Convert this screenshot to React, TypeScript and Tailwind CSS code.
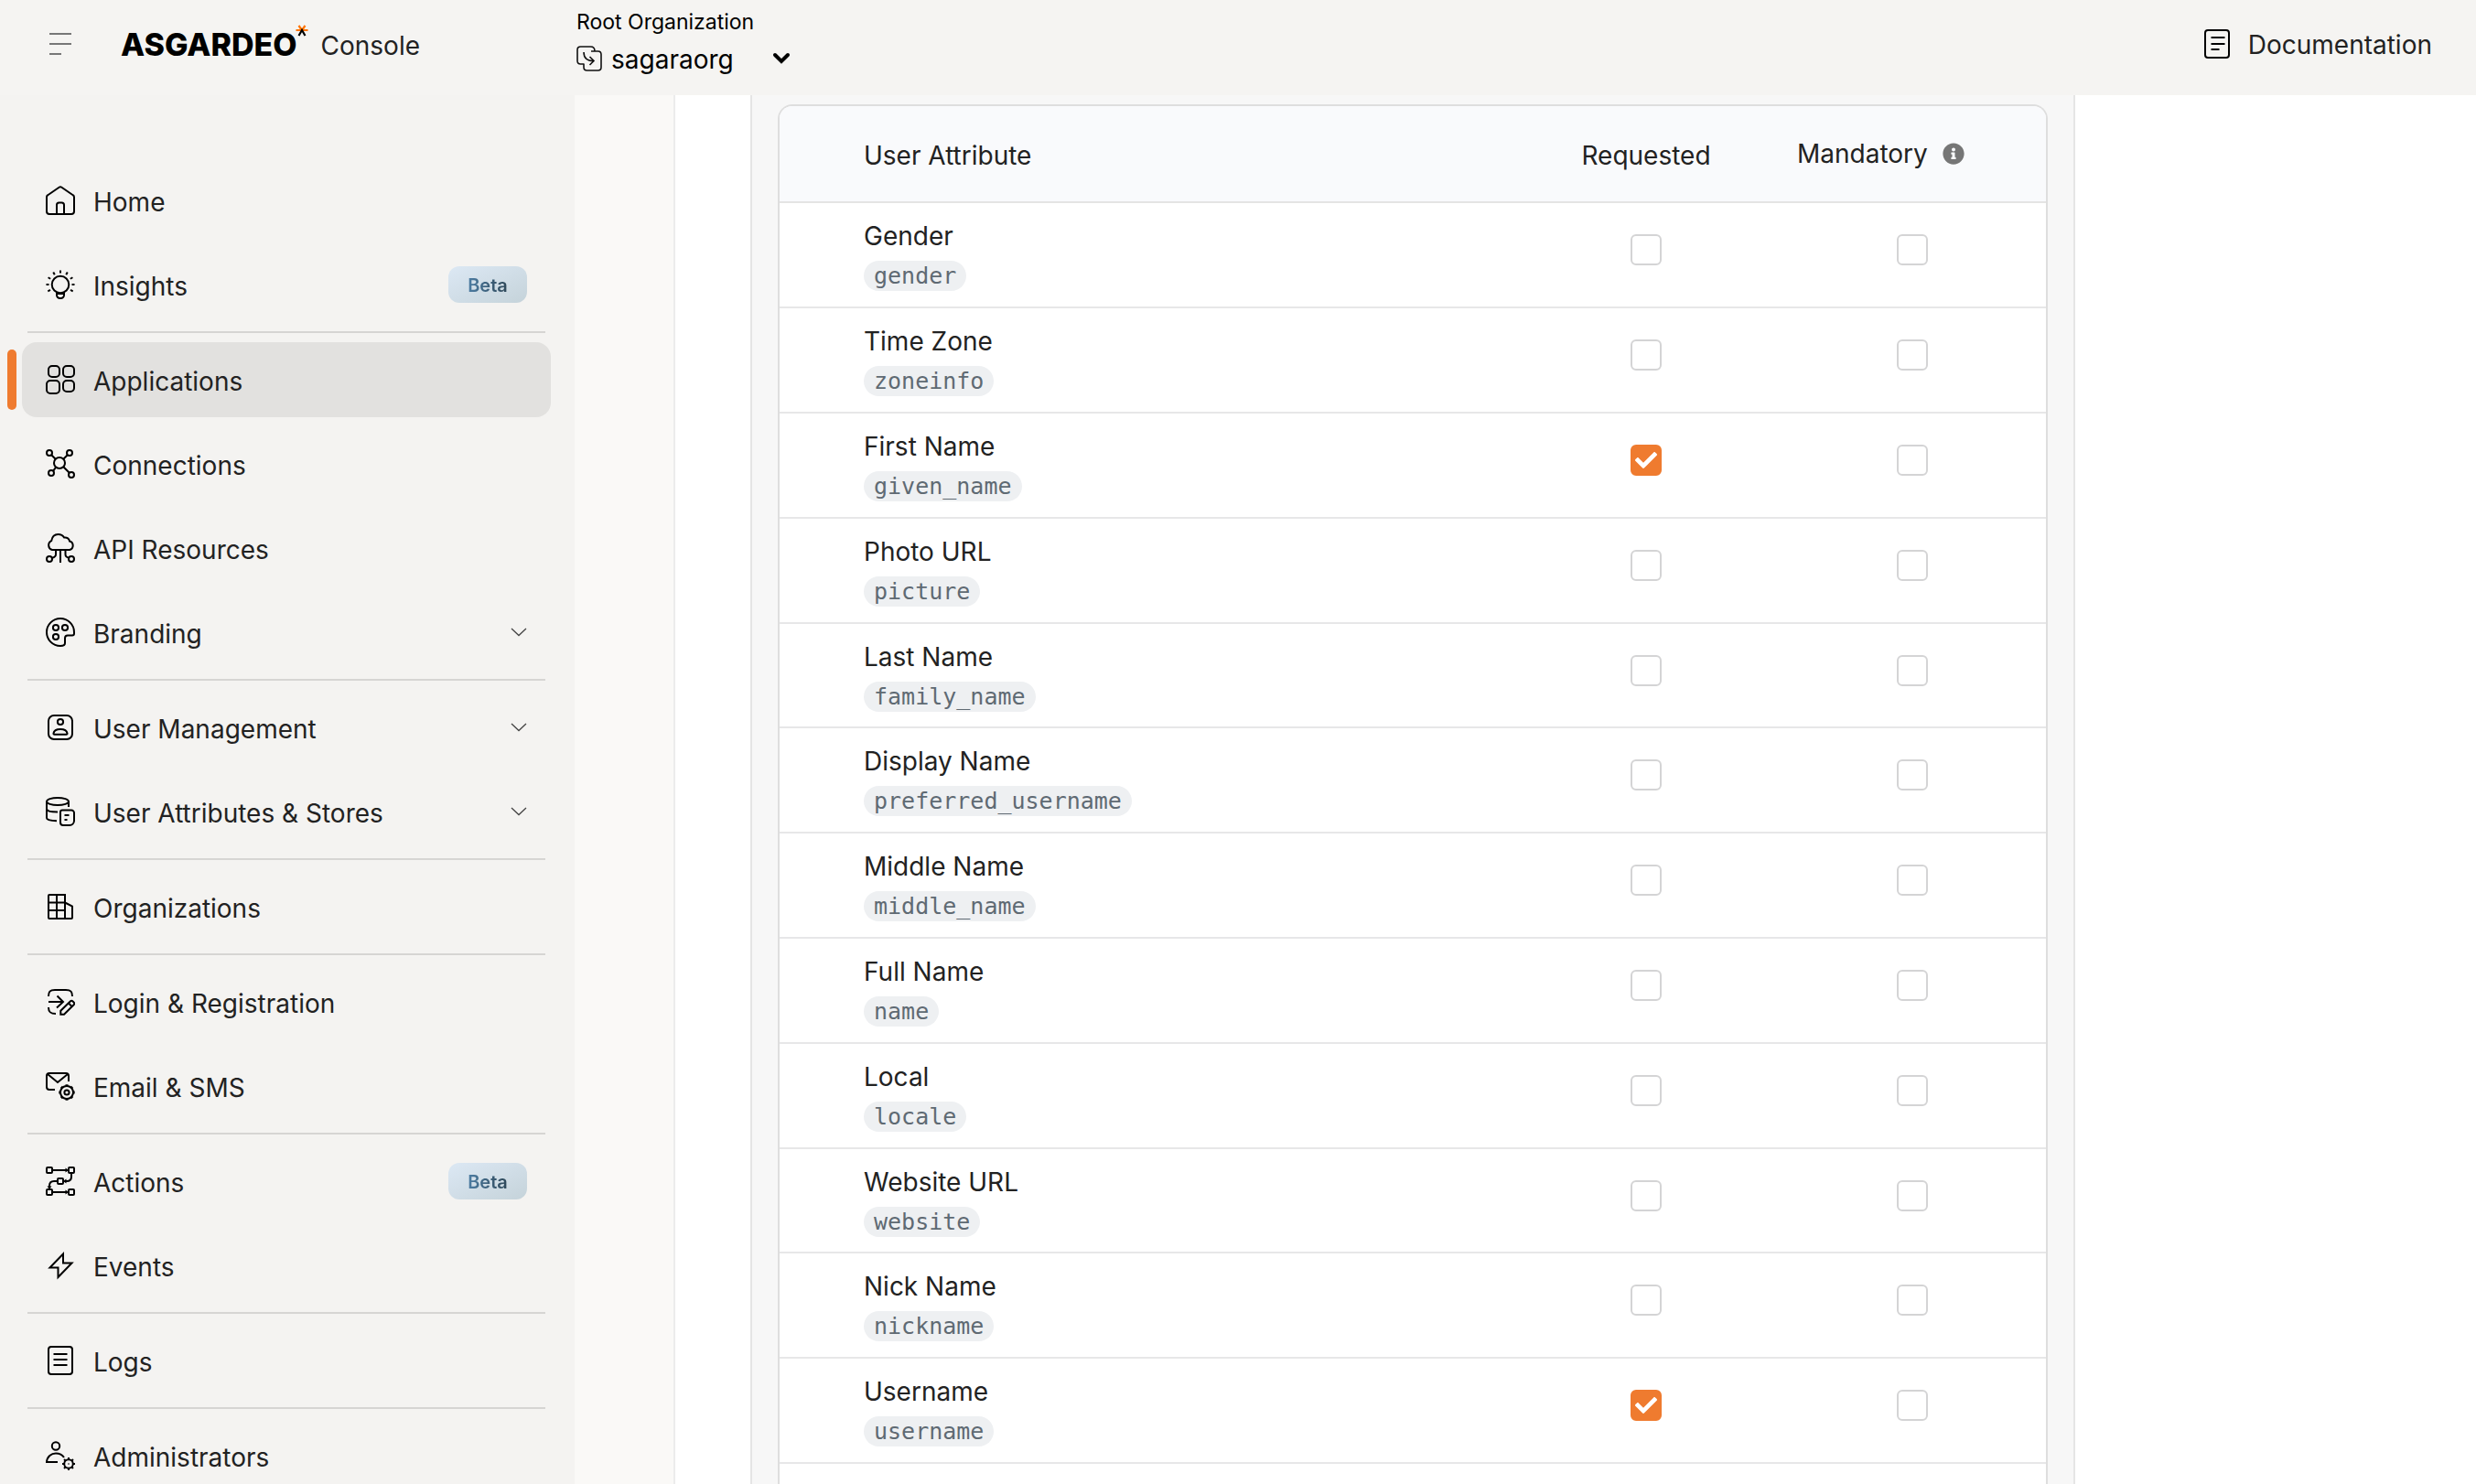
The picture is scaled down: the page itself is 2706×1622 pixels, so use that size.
import type { ReactNode } from "react";
import { FaCheck, FaInfoCircle } from "react-icons/fa";

function Icon({ children }: { children: ReactNode }) {
  return (
    <svg viewBox="0 0 32 32" className="size-8 shrink-0" fill="none" stroke="#000" strokeWidth="2" aria-hidden="true">
      {children}
    </svg>
  );
}

const rayAngles = [-118, -90, -60, -30, 0, 30, 60, 90, 118];
const teeth = [0, 45, 90, 135, 180, 225, 270, 315];

const HomeIcon = (
  <Icon>
    <path d="M1 12.6Q1 11 2.3 10.2L14.6 1.7Q16 .7 17.4 1.7L29.7 10.2Q31 11 31 12.6V28a3 3 0 0 1-3 3H4a3 3 0 0 1-3-3Z" />
    <path d="M12 31V21a2.5 2.5 0 0 1 2.5-2.5h3A2.5 2.5 0 0 1 20 21v10" />
  </Icon>
);
const InsightsIcon = (
  <Icon>
    <circle cx="16" cy="16" r="9.3" />
    <path d="M12 24.5v3a3.5 3.5 0 0 0 3.5 3.5h1a3.5 3.5 0 0 0 3.5-3.5v-3M12 26h8" />
    {rayAngles.map((a) => (
      <path key={a} d="M16 .5v3" transform={`rotate(${a} 16 16)`} />
    ))}
  </Icon>
);
const ApplicationsIcon = (
  <Icon>
    <rect x="3" y="1" width="12" height="12" rx="4" />
    <rect x="19" y="1" width="12" height="12" rx="4" />
    <rect x="1" y="17" width="14" height="14" rx="4" />
    <rect x="19" y="17" width="12" height="12" rx="4" />
  </Icon>
);
const ConnectionsIcon = (
  <Icon>
    <circle cx="15" cy="15" r="6" />
    <circle cx="4" cy="4" r="3" />
    <circle cx="26" cy="4" r="3" />
    <circle cx="6" cy="26" r="3" />
    <circle cx="28" cy="28" r="3" />
    <path d="M6.2 6.2l4.5 4.5M23.8 6.2l-4.5 4.5M8 23.8l3-4M25.8 25.8l-6.5-6.5" />
  </Icon>
);
const ApiIcon = (
  <Icon>
    <path d="M7 18a5.3 5.3 0 0 1-.8-9.9C7 3.6 9.8 1 13.5 1c3 0 5.3 1.3 6.6 3.5 3.2-.4 5.6 1.2 5.9 4A4.9 4.9 0 0 1 26 18Z" />
    <path d="M16 18v14M11 18v5q0 3-4.5 3.8M21.5 18v5q0 3 4 3.8" />
    <circle cx="4" cy="28" r="3" />
    <circle cx="28" cy="28" r="3" />
  </Icon>
);
const BrandingIcon = (
  <Icon>
    <path d="M31 16v1.5a2 2 0 0 1-2 2h-5a3 3 0 0 0-3 3V28q0 2.8-5 3A15 15 0 1 1 31 16Z" />
    <circle cx="11" cy="11" r="3.1" />
    <circle cx="21" cy="11" r="3.1" />
    <circle cx="11" cy="21" r="3.1" />
  </Icon>
);
const UserManagementIcon = (
  <Icon>
    <rect x="3" y="3" width="26" height="26" rx="6" />
    <circle cx="16" cy="10" r="3.1" />
    <path d="M8.5 22.5C9 19.5 12 18 16 18s7 1.5 7.5 4.5q.1 1.2-1 1.2h-13q-1.1 0-1-1.2Z" />
  </Icon>
);
const StoresIcon = (
  <Icon>
    <ellipse cx="13" cy="5" rx="12" ry="4" />
    <path d="M25 5v6M1 5v18c0 2 4 3 11 3.3M1 13c0 2.5 5 3.5 12 3.5" />
    <path d="M18 14.5h10a3 3 0 0 1 3 3V26a5 5 0 0 1-5 5h-7a3 3 0 0 1-3-3V16.5a2 2 0 0 1 2-2ZM20.5 20h5M20.5 25h3" />
  </Icon>
);
const OrganizationsIcon = (
  <Icon>
    <path d="M4 3h17v26H4a1 1 0 0 1-1-1V4a1 1 0 0 1 1-1ZM12 3v26M3 11.5h18M3 20h18M21 11.5l8 4V28a1 1 0 0 1-1 1h-7" />
  </Icon>
);
const LoginIcon = (
  <Icon>
    <path d="M3 10c0-5 1.5-7 7-7h12c5.5 0 7 2 7 7M3 16h15.5M12.5 9.5l6.5 6.5-7 6.5M3 22c0 5 2 7 8 7" />
    <path d="M16.3 29.7v-4l10.5-10.2a2 2 0 0 1 2.8 0l1 1a2 2 0 0 1 0 2.8L20 29.7ZM25 17.5l3.5 3.5" />
  </Icon>
);
const EmailIcon = (
  <Icon>
    <path d="M10 20H4a3 3 0 0 1-3-3V5a3 3 0 0 1 3-3h18a3 3 0 0 1 3 3v6M2 3l11 9L24 3" />
    <circle cx="23" cy="23" r="7" />
    <circle cx="23" cy="23" r="2.6" />
    {teeth.map((a) => (
      <path key={a} d="M21.5 15.3h3" transform={`rotate(${a} 23 23)`} />
    ))}
  </Icon>
);
const ActionsIcon = (
  <Icon>
    <rect x="1" y="1" width="6" height="6" rx="1" />
    <rect x="25" y="1" width="6" height="6" rx="1" />
    <rect x="13" y="13" width="6" height="6" rx="1" />
    <rect x="1" y="25" width="6" height="6" rx="1" />
    <rect x="25" y="25" width="6" height="6" rx="1" />
    <path d="M7 4h16M28 7v4q0 5-5 5h-2M13 16H9q-5 0-5 5v2M7 28h16" />
    <path d="M21.5 1.5L25 4l-3.5 2.5ZM21.5 25.5L25 28l-3.5 2.5ZM22.5 13.5L19 16l3.5 2.5ZM1.5 21.5L4 25l2.5-3.5Z" fill="#000" strokeWidth="0" />
  </Icon>
);
const EventsIcon = (
  <Icon>
    <path d="M19 3.5V13.5h9.5L13.5 29V18.5H4.5Z" />
  </Icon>
);
const LogsIcon = (
  <Icon>
    <rect x="3" y="1" width="26" height="30" rx="3" />
    <path d="M8.5 9h15M8.5 15h15M8.5 21h15" />
  </Icon>
);
const DocumentationIcon = (
  <Icon>
    <rect x="3" y="1" width="26" height="30" rx="3" />
    <path d="M9.5 9h15M9.5 16h15M9.5 22h9" />
  </Icon>
);
const AdministratorsIcon = (
  <Icon>
    <circle cx="11" cy="5.5" r="4.2" />
    <path d="M13 23H1C1.5 17 6 13.5 11 13.5c4 0 7 1.5 9 4.5" />
    <circle cx="25" cy="25" r="4.8" />
    <circle cx="25" cy="25" r=".8" fill="#000" strokeWidth="0" />
    {teeth.map((a) => (
      <path key={a} d="M25 18v2" transform={`rotate(${a} 25 25)`} />
    ))}
  </Icon>
);

type NavItem = { label: string; icon: ReactNode; active?: boolean; beta?: boolean; expandable?: boolean };

const navGroups: NavItem[][] = [
  [
    { label: "Home", icon: HomeIcon },
    { label: "Insights", icon: InsightsIcon, beta: true },
  ],
  [
    { label: "Applications", icon: ApplicationsIcon, active: true },
    { label: "Connections", icon: ConnectionsIcon },
    { label: "API Resources", icon: ApiIcon },
    { label: "Branding", icon: BrandingIcon, expandable: true },
  ],
  [
    { label: "User Management", icon: UserManagementIcon, expandable: true },
    { label: "User Attributes & Stores", icon: StoresIcon, expandable: true },
  ],
  [{ label: "Organizations", icon: OrganizationsIcon }],
  [
    { label: "Login & Registration", icon: LoginIcon },
    { label: "Email & SMS", icon: EmailIcon },
  ],
  [
    { label: "Actions", icon: ActionsIcon, beta: true },
    { label: "Events", icon: EventsIcon },
  ],
  [{ label: "Logs", icon: LogsIcon }],
  [{ label: "Administrators", icon: AdministratorsIcon }],
];

const attributes = [
  { name: "Gender", claim: "gender" },
  { name: "Time Zone", claim: "zoneinfo" },
  { name: "First Name", claim: "given_name", requested: true },
  { name: "Photo URL", claim: "picture" },
  { name: "Last Name", claim: "family_name" },
  { name: "Display Name", claim: "preferred_username" },
  { name: "Middle Name", claim: "middle_name" },
  { name: "Full Name", claim: "name" },
  { name: "Local", claim: "locale" },
  { name: "Website URL", claim: "website" },
  { name: "Nick Name", claim: "nickname" },
  { name: "Username", claim: "username", requested: true },
];

function BetaBadge() {
  return (
    <span className="flex h-10 w-[86px] items-center justify-center rounded-xl bg-linear-to-br from-[#dce8f4] to-[#c5d3da]">
      <span className="bg-linear-to-r from-[#4d7da3] to-[#2f4859] bg-clip-text pt-0.5 text-xl font-semibold text-transparent">
        Beta
      </span>
    </span>
  );
}

function NavLink({ item }: { item: NavItem }) {
  const inner = (
    <>
      {item.icon}
      <span className="flex-1 pt-1 text-left">{item.label}</span>
      {item.beta && <BetaBadge />}
      {item.expandable && (
        <svg viewBox="0 0 18 10" className="h-2.5 w-[18px]" fill="none" stroke="#444" strokeWidth="1.3" aria-hidden="true">
          <path d="M1 1l8 7.5L17 1" />
        </svg>
      )}
    </>
  );
  return (
    <li className="relative">
      {item.active && <span className="absolute inset-y-2 -left-4 w-2.5 rounded-full bg-[#ef7b2f]" />}
      {item.expandable ? (
        <button type="button" className="flex h-[82px] w-full items-center gap-5 rounded-2xl px-[26px]">
          {inner}
        </button>
      ) : (
        <a
          href="#"
          aria-current={item.active ? "page" : undefined}
          className="flex h-[82px] items-center gap-5 rounded-2xl px-[26px] aria-[current=page]:bg-[#e2e1df]"
        >
          {inner}
        </a>
      )}
    </li>
  );
}

function Sidebar() {
  return (
    <nav aria-label="Main" className="w-[628px] shrink-0 overflow-hidden bg-[#f4f3f1] pt-[74px] pr-[26px] pl-6">
      {navGroups.map((group, index) => (
        <div key={group[0].label}>
          {index > 0 && <hr className="mx-1.5 my-2.5 border-t-2 border-[#d6d5d3]" />}
          <ul className="flex flex-col gap-2.5">
            {group.map((item) => (
              <NavLink key={item.label} item={item} />
            ))}
          </ul>
        </div>
      ))}
    </nav>
  );
}

function Header() {
  return (
    <header className="flex h-[104px] shrink-0 items-stretch bg-[#f5f4f2]">
      <div className="flex w-[628px] shrink-0 items-center pb-2 pl-[54px]">
        <button type="button" aria-label="Toggle menu" className="mr-[54px]">
          <svg viewBox="0 0 24 26" className="h-[26px] w-6" stroke="#777" strokeWidth="2" aria-hidden="true">
            <path d="M0 2h24M0 13h24M0 24h13" />
          </svg>
        </button>
        <a href="#" className="flex items-center">
          <span className="text-[34px] font-extrabold text-black">ASGARDEO</span>
          <svg viewBox="0 0 14 14" className="-ml-0.5 mb-7 size-3.5" fill="none" strokeWidth="2.2" aria-hidden="true">
            <path d="M7 6L3.5 1M7 6l3.5-5M7 6H.5M7 6h6.5" stroke="#ff7300" />
            <path d="M3.5 12L7 6l3.5 6" stroke="#000" />
          </svg>
          <span className="ml-3.5 pt-1">Console</span>
        </a>
      </div>
      <button type="button" className="flex flex-col items-start pt-2 pl-0.5 text-black">
        <span className="text-[23px] leading-8">Root Organization</span>
        <span className="flex h-12 items-center gap-2.5">
          <svg viewBox="0 0 28 28" className="size-7" fill="none" stroke="#111" strokeWidth="1.6" aria-hidden="true">
            <path d="M8 20H4.5Q1 20 1 16.5V4.5Q1 1 4.5 1h11Q20 1 20 6M16 6h7.5Q27 6 27 9.5v14Q27 27 23.5 27h-12Q8 27 8 23.5V19.5" />
            <path d="M8 7c0 6 3 9.5 10.5 9.5M14.5 12l4.5 4.5-4.5 4.5" />
          </svg>
          <span className="pt-0.5 text-[28px]">sagaraorg</span>
          <svg viewBox="0 0 20 14" className="ml-8 h-3.5 w-5" fill="none" stroke="#000" strokeWidth="4" strokeLinecap="round" aria-hidden="true">
            <path d="M3 3l7 7 7-7" />
          </svg>
        </span>
      </button>
      <a href="#" className="ml-auto flex items-center gap-[18px] pr-12 pb-2">
        {DocumentationIcon}
        <span className="pt-0.5">Documentation</span>
      </a>
    </header>
  );
}

function Checkbox({ label, checked = false }: { label: string; checked?: boolean }) {
  return (
    <span className="inline-grid place-items-center align-top">
      <input
        type="checkbox"
        aria-label={label}
        defaultChecked={checked}
        className="peer col-start-1 row-start-1 size-[34px] appearance-none rounded-md border-2 border-[#d4d4d5] bg-white checked:border-[#ef7b2f] checked:bg-[#ef7b2f]"
      />
      <FaCheck className="pointer-events-none col-start-1 row-start-1 hidden size-6 text-white peer-checked:block" />
    </span>
  );
}

function AttributeTable() {
  return (
    <div className="flex-1 overflow-hidden rounded-t-2xl border-2 border-b-0 border-[#dedede] bg-white">
      <table className="w-full table-fixed border-separate border-spacing-0">
        <colgroup>
          <col />
          <col className="w-[290px]" />
          <col className="w-[292px]" />
        </colgroup>
        <thead>
          <tr className="h-[106px] bg-[#f9fafc]">
            <th scope="col" className="border-b-2 border-[#e4e4e4] pt-1 pl-[92px] text-left font-normal">
              User Attribute
            </th>
            <th scope="col" className="border-b-2 border-[#e4e4e4] pt-1 text-center font-normal">
              Requested
            </th>
            <th scope="col" className="border-b-2 border-[#e4e4e4] pl-5 font-normal">
              <span className="flex items-center gap-4">
                Mandatory
                <FaInfoCircle className="size-6 text-[#767676]" />
              </span>
            </th>
          </tr>
        </thead>
        <tbody>
          {attributes.map((row) => (
            <tr key={row.claim} className="group">
              <td className="border-b-2 border-[#e7e7e8] pt-[18px] pb-[17px] pl-[92px] group-nth-[5n]:pb-4">
                <div className="flex flex-col items-start gap-[9px]">
                  <span className="leading-9">{row.name}</span>
                  <code className="rounded-full bg-[#eef0f2] px-[11px] font-['DejaVu_Sans_Mono',monospace] text-[25px] leading-[33px] text-[#5f6a73]">
                    {row.claim}
                  </code>
                </div>
              </td>
              <td className="border-b-2 border-[#e7e7e8] pt-[34px] text-center align-top">
                <Checkbox label={`${row.name} requested`} checked={row.requested} />
              </td>
              <td className="border-b-2 border-[#e7e7e8] pt-[34px] text-center align-top">
                <Checkbox label={`${row.name} mandatory`} />
              </td>
            </tr>
          ))}
        </tbody>
      </table>
    </div>
  );
}

export default function App() {
  return (
    <div className="flex h-screen flex-col overflow-hidden bg-[#faf9f7] font-['Inter',sans-serif] text-[28px] text-[#222]">
      <Header />
      <div className="flex min-h-0 flex-1">
        <Sidebar />
        <main className="ml-[108px] flex min-w-0 flex-1 border-l-2 border-[#ececec] bg-white pr-[438px] pl-[82px]">
          <section className="flex min-w-0 flex-1 flex-col overflow-hidden border-x-2 border-[#e5e5e5] bg-[#f7f7f7] px-7 pt-2.5">
            <AttributeTable />
          </section>
        </main>
      </div>
    </div>
  );
}
